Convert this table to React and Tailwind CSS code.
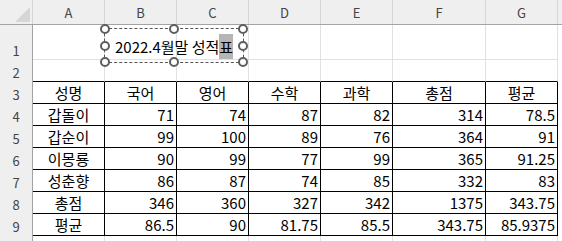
import React from 'react';

const COLS = [
  { key: 'A', w: 'w-[72px]' },
  { key: 'B', w: 'w-[72px]' },
  { key: 'C', w: 'w-[72px]' },
  { key: 'D', w: 'w-[72px]' },
  { key: 'E', w: 'w-[72px]' },
  { key: 'F', w: 'w-[93px]' },
  { key: 'G', w: 'w-[72px]' },
];

const HEAD = ['성명', '국어', '영어', '수학', '과학', '총점', '평균'];

const DATA = [
  ['갑돌이', 71, 74, 87, 82, 314, 78.5],
  ['갑순이', 99, 100, 89, 76, 364, 91],
  ['이몽룡', 90, 99, 77, 99, 365, 91.25],
  ['성춘향', 86, 87, 74, 85, 332, 83],
  ['총점', 346, 360, 327, 342, 1375, 343.75],
  ['평균', 86.5, 90, 81.75, 85.5, 343.75, 85.9375],
];

const font = "font-['Noto_Sans_CJK_KR','Noto_Sans',sans-serif]";

function RowHead({ n, h }) {
  return (
    <div className={`w-[33px] ${h} shrink-0 bg-[#efefef] border-r border-[#a3a3a3] flex items-end justify-center pb-[3px] text-[13px] leading-none text-[#444]`}>
      {n}
    </div>
  );
}

function Handle({ className }) {
  return (
    <span className={`absolute w-[10px] h-[10px] rounded-full border-2 border-[#5e5e5e] bg-white -translate-x-1/2 -translate-y-1/2 ${className}`} />
  );
}

function PlainRow({ n, h }) {
  return (
    <div className="flex">
      <RowHead n={n} h={h} />
      {COLS.map((c) => (
        <div key={c.key} className={`${c.w} ${h} shrink-0 border-r border-b border-[#e1e1e1]`} />
      ))}
      <div className={`flex-1 ${h}`} />
    </div>
  );
}

export default function App() {
  return (
    <div className={`w-[562px] h-[241px] overflow-hidden bg-white relative ${font}`}>
      {/* column headers */}
      <div className="flex h-[25px] bg-[#efefef] border-b border-[#a3a3a3]">
        <div className="w-[33px] shrink-0 border-r border-[#d6d6d6] relative">
          <svg width="33" height="24" className="absolute left-0 top-0">
            <polygon points="30,7 30,22 15,22" fill="#d6d6d6" />
          </svg>
        </div>
        {COLS.map((c) => (
          <div key={c.key} className={`${c.w} shrink-0 border-r border-[#d6d6d6] flex items-center justify-center text-[13px] text-[#444] leading-none`}>
            {c.key}
          </div>
        ))}
        <div className="flex-1" />
      </div>

      <PlainRow n="1" h="h-[35px]" />

      {/* row 2: top border of the table */}
      <div className="flex">
        <RowHead n="2" h="h-[22px]" />
        {COLS.map((c) => (
          <div key={c.key} className={`${c.w} h-[22px] shrink-0 border-r border-[#e1e1e1] border-b border-b-black`} />
        ))}
        <div className="flex-1 h-[22px]" />
      </div>

      {/* table */}
      {[HEAD, ...DATA].map((row, ri) => (
        <div key={ri} className="flex">
          <RowHead n={ri + 3} h="h-[22px]" />
          {row.map((v, ci) => (
            <div
              key={ci}
              className={`${COLS[ci].w} h-[22px] shrink-0 border-r border-b border-black flex items-end pb-[1px] text-[15px] leading-[19px] text-black ${
                ri === 0 || ci === 0 ? 'justify-center' : 'justify-end pr-[2px]'
              }`}
            >
              {v}
            </div>
          ))}
          <div className="flex-1 h-[22px]" />
        </div>
      ))}

      {/* row 10, cut off by the window */}
      <PlainRow n="" h="h-[22px]" />

      {/* text box */}
      <div className="absolute left-[104px] top-[28px] w-[140px] h-[35px] border border-dashed border-[#555]">
        <div className="absolute left-[10px] top-[5px] h-[25px] flex items-center text-[15px] leading-none text-black whitespace-nowrap">
          <span>2022.4월말 성적</span>
          <span className="h-[25px] flex items-center bg-[#b5b5b5]">표</span>
        </div>
        <Handle className="left-0 top-0" />
        <Handle className="left-1/2 top-0" />
        <Handle className="left-full top-0" />
        <Handle className="left-0 top-1/2" />
        <Handle className="left-full top-1/2" />
        <Handle className="left-0 top-full" />
        <Handle className="left-1/2 top-full" />
        <Handle className="left-full top-full" />
      </div>
    </div>
  );
}
